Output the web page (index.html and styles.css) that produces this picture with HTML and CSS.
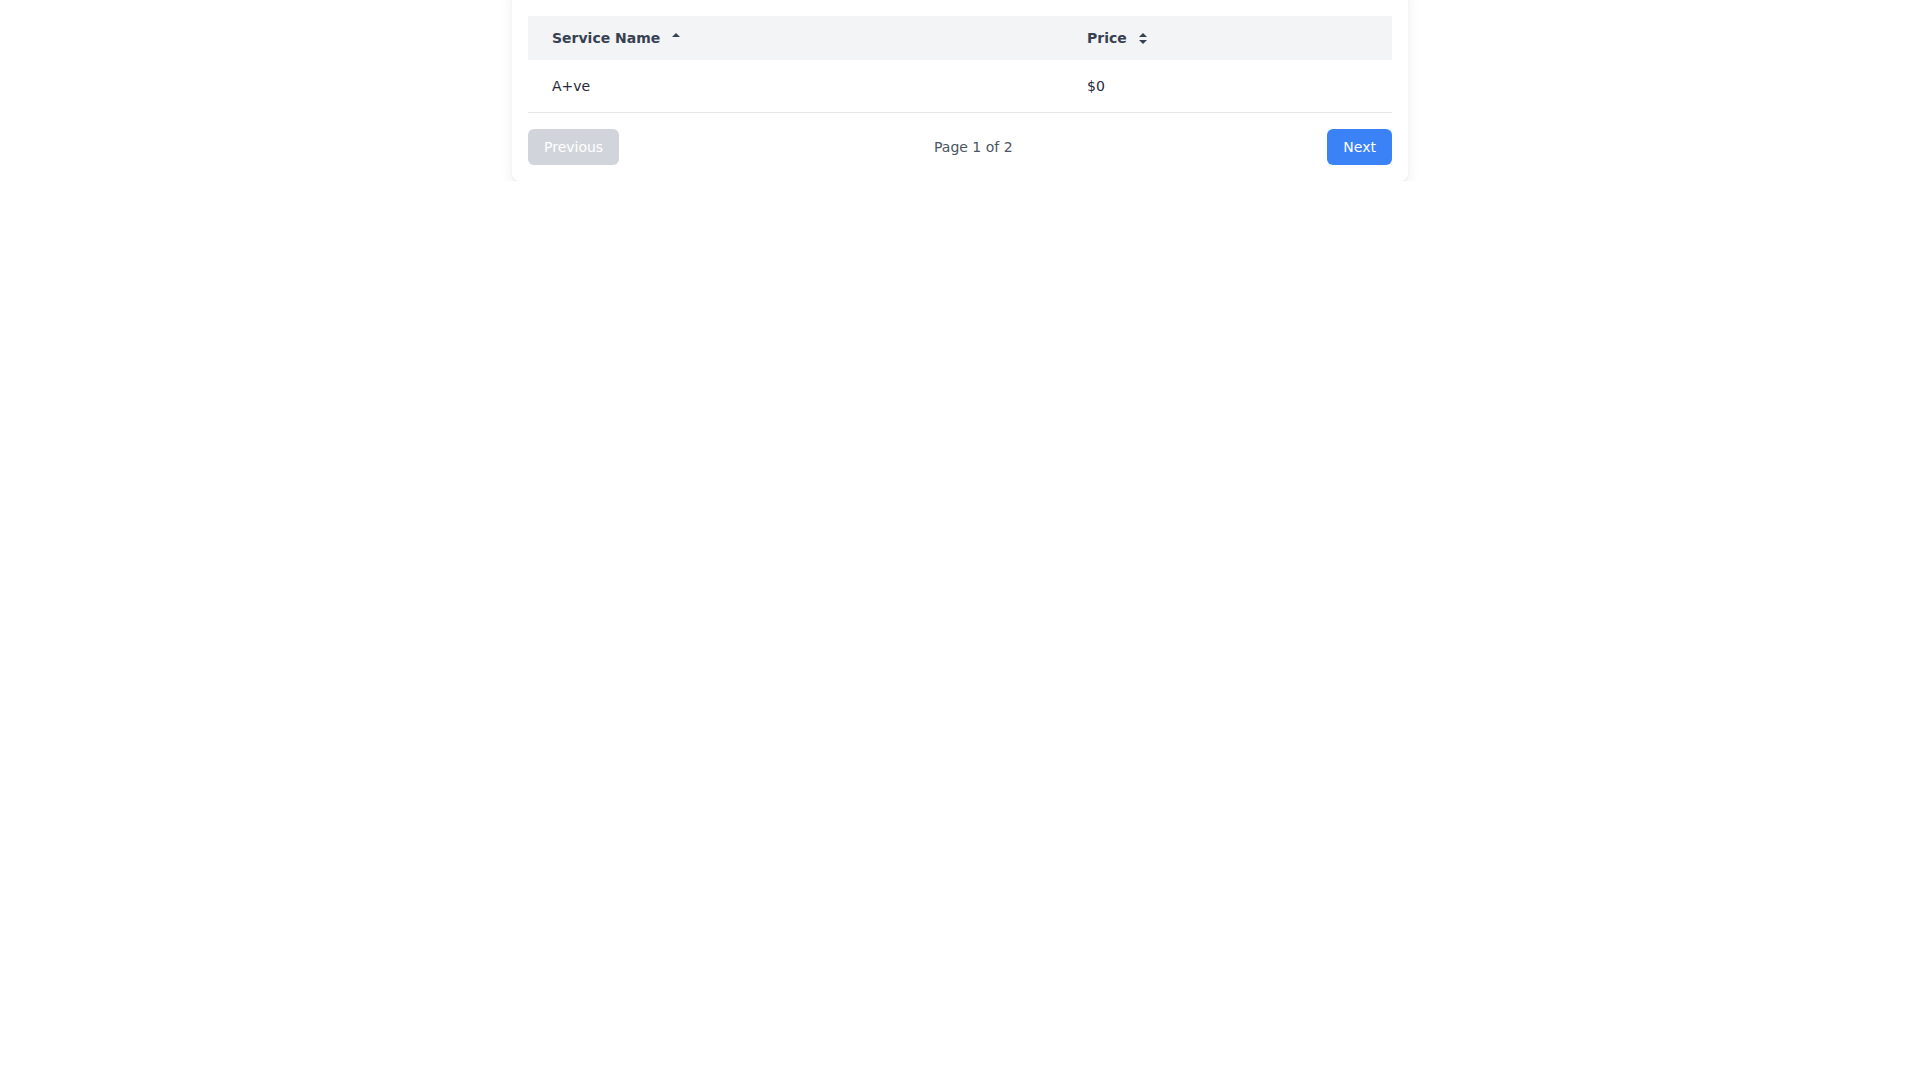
FILE: index.html
```html
<!DOCTYPE html>
<html lang="en">
<head>
  <meta charset="UTF-8" />
  <meta name="viewport" content="width=device-width, initial-scale=1.0" />
  <title>Services</title>
  <link rel="stylesheet" href="styles.css">
</head>
<body>
  <div class="card">
    <table class="services">
      <thead>
        <tr>
          <th class="col-name">
            Service Name<svg class="sort" width="10" height="14" viewBox="0 0 10 14"><path d="M1 5 L5 1 L9 5 Z" fill="#374151"/></svg>
          </th>
          <th>
            Price<svg class="sort" width="10" height="14" viewBox="0 0 10 14"><path d="M1 5 L5 1 L9 5 Z M1 8 L5 12 L9 8 Z" fill="#374151"/></svg>
          </th>
        </tr>
      </thead>
      <tbody>
        <tr>
          <td>A+ve</td>
          <td>$0</td>
        </tr>
      </tbody>
    </table>

    <div class="pager">
      <button class="btn btn-disabled" disabled>Previous</button>
      <span class="page-info">Page 1 of 2</span>
      <button class="btn btn-primary">Next</button>
    </div>
  </div>
</body>
</html>
```

FILE: styles.css
```css
body { margin: 0; background: #fff; font-family: "DejaVu Sans", sans-serif; color: #1f2937; }
/* card is scrolled partly out of view: its top sits above the viewport */
.card { width: 864px; margin: -24px auto 0; padding: 40px 16px 16px; background: #fff; border-radius: 8px; box-shadow: 0 10px 15px -3px rgba(0,0,0,0.1), 0 4px 6px -4px rgba(0,0,0,0.1); }
.services { width: 100%; border-collapse: collapse; font-size: 14px; line-height: 20px; }
.services th { background: #f3f4f6; color: #374151; font-weight: bold; text-align: left; padding: 12px 24px; }
.services th.col-name { width: 487px; }
.services td { padding: 16px 24px; color: #1f2937; border-bottom: 1px solid #e5e7eb; }
.sort { margin-left: 11px; vertical-align: -3px; }
.pager { display: flex; justify-content: space-between; align-items: center; margin-top: 16px; }
.page-info { font-size: 14px; color: #4b5563; }
.btn { font-family: inherit; font-size: 14px; line-height: 20px; padding: 8px 16px; border: none; border-radius: 6px; color: #fff; cursor: pointer; }
.btn-disabled { background: #d1d5db; cursor: not-allowed; }
.btn-primary { background: #3b82f6; }
```
